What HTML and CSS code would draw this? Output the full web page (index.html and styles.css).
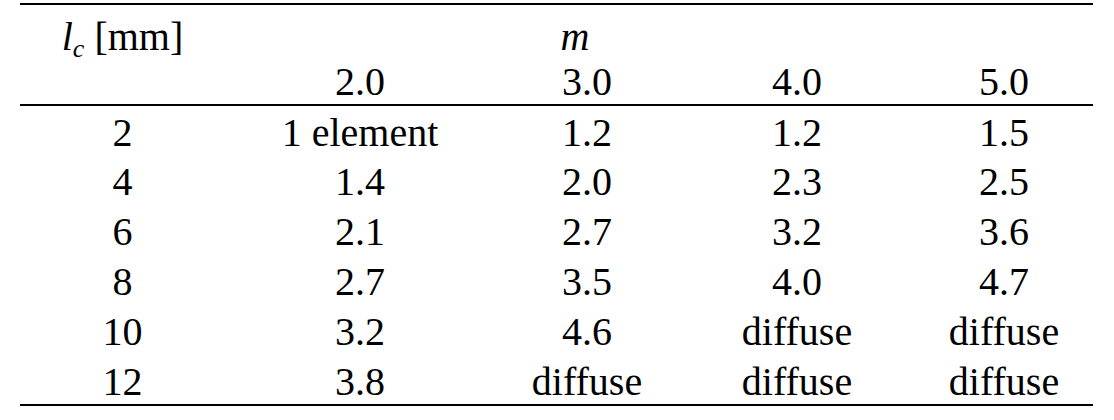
FILE: index.html
```html
<html>
<head>
<link rel="stylesheet" href="styles.css">
</head>
<body>
    <table class="results">
        <colgroup>
            <col class="col-lc">
            <col class="col-m2">
            <col class="col-m3">
            <col class="col-m4">
            <col class="col-m5">
        </colgroup>
        <thead>
            <tr class="head-top">
                <th><i>l<sub>c</sub></i> [mm]</th>
                <th></th>
                <th class="m-label"><i>m</i></th>
                <th></th>
                <th></th>
            </tr>
            <tr class="head-sub">
                <th></th>
                <th>2.0</th>
                <th>3.0</th>
                <th>4.0</th>
                <th>5.0</th>
            </tr>
        </thead>
        <tbody>
            <tr><td>2</td><td>1 element</td><td>1.2</td><td>1.2</td><td>1.5</td></tr>
            <tr><td>4</td><td>1.4</td><td>2.0</td><td>2.3</td><td>2.5</td></tr>
            <tr><td>6</td><td>2.1</td><td>2.7</td><td>3.2</td><td>3.6</td></tr>
            <tr><td>8</td><td>2.7</td><td>3.5</td><td>4.0</td><td>4.7</td></tr>
            <tr><td>10</td><td>3.2</td><td>4.6</td><td>diffuse</td><td>diffuse</td></tr>
            <tr><td>12</td><td>3.8</td><td>diffuse</td><td>diffuse</td><td>diffuse</td></tr>
        </tbody>
    </table>
</body>
</html>
```

FILE: styles.css
```css
* {
    box-sizing: border-box;
}

body {
    margin: 0;
    padding: 3px 0 0 20px;
    background: #fff;
    color: #000;
}

.results {
    font-family: "Liberation Serif", "Times New Roman", serif;
    font-size: 40px;
    color: #000;
    border-collapse: collapse;
    table-layout: fixed;
    width: 1073px;
    border-top: 2px solid #000;
}

.col-lc { width: 205px; }
.col-m2 { width: 270px; }
.col-m3 { width: 184px; }
.col-m4 { width: 236px; }
.col-m5 { width: 178px; }

.results th,
.results td {
    padding: 0;
    text-align: center;
    font-weight: normal;
    white-space: nowrap;
}

.head-top th {
    padding-top: 9px;
    height: 55px;
    line-height: 45px;
    vertical-align: top;
}

.head-top .m-label {
    padding-right: 24px;
}

.head-sub th {
    height: 46px;
    line-height: 45px;
    vertical-align: top;
    border-bottom: 2px solid #000;
}

.results sub {
    font-size: 26px;
    vertical-align: -7px;
    line-height: 0;
}

.results tbody td {
    line-height: 45px;
    padding-top: 4px;
    height: 50px;
    vertical-align: top;
}

.results tbody tr:last-child td {
    border-bottom: 2px solid #000;
}
```
